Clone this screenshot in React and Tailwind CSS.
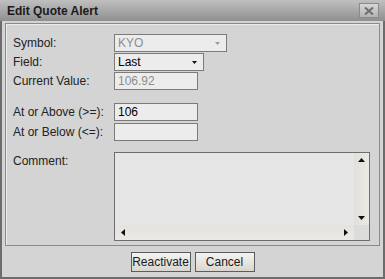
const font = { fontFamily: '"Liberation Sans", Arial, sans-serif' }

function Arrow({ dim }) {
  return (
    <svg width="5" height="3" viewBox="0 0 5 3" className="shrink-0">
      <path d="M0 0h5L2.5 3z" fill={dim ? '#9a9a9a' : '#111'} />
    </svg>
  )
}

function Select({ value, width, dim }) {
  return (
    <div
      className={`h-[18px] border border-[#7b7b7b] bg-[#ececec] flex items-center justify-between pl-[3px] pr-[6px] text-[12px] leading-none ${dim ? 'text-[#8c8c8c]' : 'text-black'}`}
      style={{ width }}
    >
      <span>{value}</span>
      <Arrow dim={dim} />
    </div>
  )
}

function Field({ value, dim }) {
  return (
    <div className={`w-[84px] h-[18px] border border-[#7b7b7b] bg-[#ececec] flex items-center pl-[3px] text-[12px] leading-none ${dim ? 'text-[#8c8c8c]' : 'text-black'}`}>
      {value}
    </div>
  )
}

function Row({ label, children, className = '' }) {
  return (
    <div className={`flex items-center ${className}`}>
      <div className="w-[101px] text-[12px] text-[#222] leading-none">{label}</div>
      {children}
    </div>
  )
}

function Tri({ d }) {
  return (
    <svg width="7" height="7" viewBox="0 0 7 7">
      <path d={d} fill="#111" />
    </svg>
  )
}

export default function App() {
  return (
    <div className="w-[385px] h-[279px] bg-[#d4d4d4] border-x-2 border-b-2 border-[#6c6c6c] flex flex-col" style={font}>
      {/* title bar */}
      <div className="h-[21px] -mx-[2px] bg-gradient-to-b from-[#c0c0c0] to-[#8f8f8f] flex items-center justify-between pl-[7px] pr-[6px]">
        <span className="text-[12px] font-bold text-[#1a1a1a] leading-none">Edit Quote Alert</span>
        <div className="w-[20px] h-[15px] border border-[#8a8a8a] bg-gradient-to-b from-[#d6d6d6] to-[#b4b4b4] flex items-center justify-center">
          <svg width="10" height="8" viewBox="0 0 10 8">
            <path d="M1 0.5L9 7.5M9 0.5L1 7.5" stroke="#6e6e6e" strokeWidth="2" />
          </svg>
        </div>
      </div>

      {/* panel */}
      <div className="mt-[2px] mx-[3px] h-[223px] border border-[#8a8a8a] shadow-[inset_1px_1px_0_#ececec] pl-[7px] pt-[10px]">
        <Row label="Symbol:">
          <Select value="KYO" width={113} dim />
        </Row>
        <Row label="Field:" className="mt-[1px]">
          <Select value="Last" width={90} />
        </Row>
        <Row label="Current Value:" className="mt-[1px]">
          <Field value="106.92" dim />
        </Row>
        <Row label="At or Above (>=):" className="mt-[13px]">
          <Field value="106" />
        </Row>
        <Row label="At or Below (<=):" className="mt-[2px]">
          <Field value="" />
        </Row>
        <div className="flex mt-[11px]">
          <div className="w-[101px] text-[12px] text-[#222] leading-none pt-[3px]">Comment:</div>
          <div className="w-[256px] h-[89px] border border-[#6e6e6e] bg-[#e6e6e6] grid grid-cols-[1fr_15px] grid-rows-[1fr_15px]">
            <div />
            <div className="bg-gradient-to-r from-[#e2e0dc] to-[#ece9e4] flex flex-col items-center justify-between py-[4px]">
              <Tri d="M0 5h7L3.5 1z" />
              <Tri d="M0 2h7L3.5 6z" />
            </div>
            <div className="bg-gradient-to-b from-[#e6e3de] to-[#ece9e4] flex items-center justify-between px-[5px]">
              <Tri d="M5 0v7L1 3.5z" />
              <Tri d="M2 0v7L6 3.5z" />
            </div>
            <div className="bg-[#dcdcdc]" />
          </div>
        </div>
      </div>

      {/* footer */}
      <div className="flex justify-center gap-[4px] mt-[6px]">
        <button className="w-[60px] h-[20px] border border-[#5c5c5c] bg-gradient-to-b from-[#f4f4f2] to-[#d9d6cf] text-[12px] text-[#1a1a1a] leading-none">Reactivate</button>
        <button className="w-[60px] h-[20px] border border-[#5c5c5c] bg-gradient-to-b from-[#f4f4f2] to-[#d9d6cf] text-[12px] text-[#1a1a1a] leading-none">Cancel</button>
      </div>
    </div>
  )
}
